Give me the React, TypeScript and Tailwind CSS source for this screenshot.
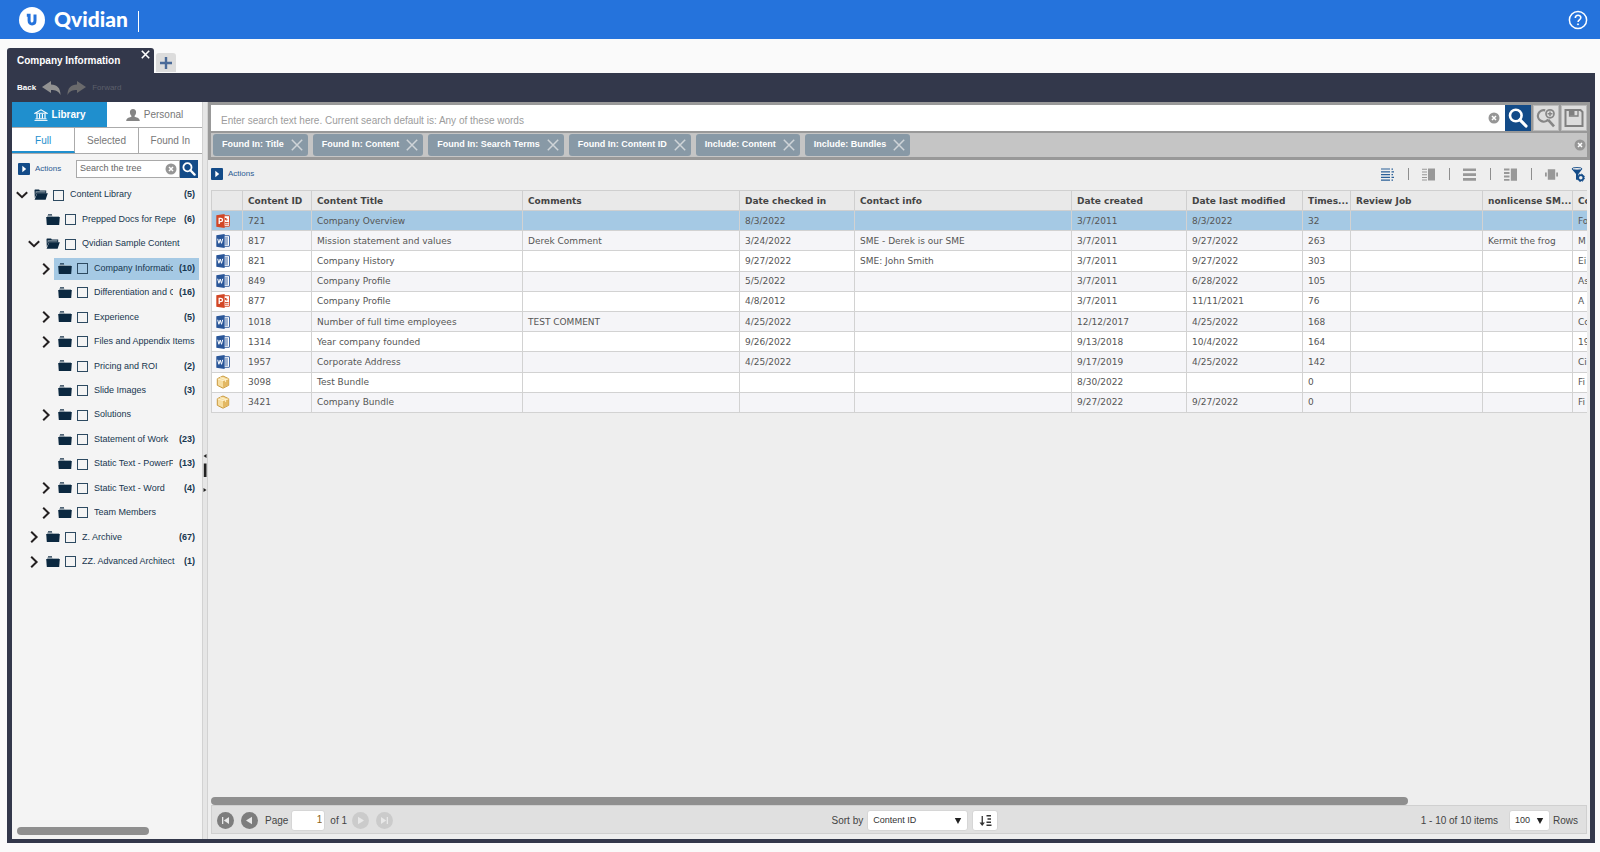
import { useState } from "react";
import type { ReactNode } from "react";

type TreeNode = {
  label: string;
  level: 0 | 1 | 2;
  count?: number;
  state?: "open" | "closed";
  selected?: boolean;
};

const tree: TreeNode[] = [
  { label: "Content Library", level: 0, count: 5, state: "open" },
  { label: "Prepped Docs for Repe", level: 1, count: 6 },
  { label: "Qvidian Sample Content", level: 1, state: "open" },
  { label: "Company Information", level: 2, count: 10, state: "closed", selected: true },
  { label: "Differentiation and C", level: 2, count: 16 },
  { label: "Experience", level: 2, count: 5, state: "closed" },
  { label: "Files and Appendix Items", level: 2, state: "closed" },
  { label: "Pricing and ROI", level: 2, count: 2 },
  { label: "Slide Images", level: 2, count: 3 },
  { label: "Solutions", level: 2, state: "closed" },
  { label: "Statement of Work", level: 2, count: 23 },
  { label: "Static Text - PowerPoint", level: 2, count: 13 },
  { label: "Static Text - Word", level: 2, count: 4, state: "closed" },
  { label: "Team Members", level: 2, state: "closed" },
  { label: "Z. Archive", level: 1, count: 67, state: "closed" },
  { label: "ZZ. Advanced Architect", level: 1, count: 1, state: "closed" },
];

const indent = ["pl-1", "pl-4", "pl-7"];

const filters = [
  "Found In: Title",
  "Found In: Content",
  "Found In: Search Terms",
  "Found In: Content ID",
  "Include: Content",
  "Include: Bundles",
];

const columns = [
  { title: "", width: "w-[31px]" },
  { title: "Content ID", width: "w-[69px]" },
  { title: "Content Title", width: "w-[211px]" },
  { title: "Comments", width: "w-[217px]" },
  { title: "Date checked in", width: "w-[115px]" },
  { title: "Contact info", width: "w-[217px]" },
  { title: "Date created", width: "w-[115px]" },
  { title: "Date last modified", width: "w-[116px]" },
  { title: "Times...", width: "w-[48px]" },
  { title: "Review Job", width: "w-[132px]" },
  { title: "nonlicense SM...", width: "w-[90px]" },
  { title: "Co", width: "w-[60px]" },
];

const rows = [
  ["ppt", "721", "Company Overview", "", "8/3/2022", "", "3/7/2011", "8/3/2022", "32", "", "", "Fo"],
  ["word", "817", "Mission statement and values", "Derek Comment", "3/24/2022", "SME - Derek is our SME", "3/7/2011", "9/27/2022", "263", "", "Kermit the frog", "M"],
  ["word", "821", "Company History", "", "9/27/2022", "SME: John Smith", "3/7/2011", "9/27/2022", "303", "", "", "Ei"],
  ["word", "849", "Company Profile", "", "5/5/2022", "", "3/7/2011", "6/28/2022", "105", "", "", "As"],
  ["ppt", "877", "Company Profile", "", "4/8/2012", "", "3/7/2011", "11/11/2021", "76", "", "", "A"],
  ["word", "1018", "Number of full time employees", "TEST COMMENT", "4/25/2022", "", "12/12/2017", "4/25/2022", "168", "", "", "Co"],
  ["word", "1314", "Year company founded", "", "9/26/2022", "", "9/13/2018", "10/4/2022", "164", "", "", "19"],
  ["word", "1957", "Corporate Address", "", "4/25/2022", "", "9/17/2019", "4/25/2022", "142", "", "", "Ci"],
  ["bundle", "3098", "Test Bundle", "", "", "", "8/30/2022", "", "0", "", "", "Fi"],
  ["bundle", "3421", "Company Bundle", "", "", "", "9/27/2022", "9/27/2022", "0", "", "", "Fi"],
];

function Magnifier({ className }: { className: string }) {
  return (
    <svg viewBox="0 0 20 20" className={className} fill="none" stroke="currentColor">
      <circle cx="7.8" cy="7.5" r="5.8" strokeWidth="2.6" />
      <path d="M12 11.8 18 18" strokeWidth="3.2" strokeLinecap="round" />
    </svg>
  );
}

function ClearIcon() {
  return (
    <svg viewBox="0 0 12 12" className="size-3">
      <circle cx="6" cy="6" r="5.5" fill="#969696" />
      <path d="M4 4l4 4M8 4l-4 4" stroke="#fff" strokeWidth="1.5" />
    </svg>
  );
}

function ActionsButton() {
  return (
    <button className="flex items-center gap-[5px] text-[8px] text-[#2b5a92]">
      <svg viewBox="0 0 12 12" className="size-3">
        <rect width="12" height="12" rx="1" fill="#134b88" />
        <path d="M4.3 2.8 8.2 6 4.3 9.2z" fill="#fff" />
      </svg>
      Actions
    </button>
  );
}

function Chevron({ open }: { open: boolean }) {
  return (
    <svg viewBox="0 0 12 12" className="size-3" fill="none" stroke="#231f20" strokeWidth="2">
      <path d={open ? "M.8 3.2 6 8.2l5.2-5" : "M3.2 .8 8.6 6l-5.4 5.2"} />
    </svg>
  );
}

function Folder({ open }: { open: boolean }) {
  return (
    <svg viewBox="0 0 14 12" className="h-3 w-3.5">
      {open ? (
        <>
          <path d="M.5 1.2.9.4h4.2l.7 1h6.4v3H3L.8 9z" fill="#0b2840" />
          <path d="M1.6 2.2h9.8v1.3H2.6l-1 2.2z" fill="#8b9aa5" />
          <path d="M.6 10.8 3.2 4.2h10.6l-2.2 6.6z" fill="#0b2840" />
        </>
      ) : (
        <>
          <path d="M1.2 2.800V1.400H6l.8.8H13v2H1.200z" fill="#8b9aa5" />
          <path d="M2 .3h4v1.100H2z" fill="#0b2840" />
          <path d="M.2 3h13.600l-.6 8H.8z" fill="#0b2840" />
        </>
      )}
    </svg>
  );
}

function FileIcon({ kind }: { kind: string }) {
  if (kind === "bundle") {
    return (
      <svg viewBox="0 0 14 14" className="size-3.5">
        <path d="M7 1 12.700 3.700v6.600L7 13.200 1.300 10.300V3.700z" fill="#f6dda0" stroke="#c9983c" strokeWidth="1" />
        <path d="M7 5.500v7.500l5.400-2.800V4z" fill="#e3b863" />
        <path d="M1.600 3.900 7 5.600l5.400-1.700M4.200 2.500 9.600 4.500v2.600" fill="none" stroke="#fff3cf" strokeWidth=".9" />
      </svg>
    );
  }
  const color = kind === "ppt" ? "#d24625" : "#2a5699";
  return (
    <svg viewBox="0 0 14 14" className="size-3.5">
      <rect x="7" y="1.700" width="6.500" height="10.600" rx=".4" fill="#fff" stroke={color} strokeWidth=".9" />
      {kind === "ppt" ? (
        <>
          <path d="M9 4h1.500v1.500H12A1.600 1.600 0 1 1 9 4z" fill={color} />
          <path d="M9 8.500h3.500M9 10.200h3.500" stroke={color} strokeWidth=".9" />
        </>
      ) : (
        <path d="M8.500 4h3.500M8.500 6h3.500M8.500 8h3.500M8.500 10h3.500" stroke={color} strokeWidth=".9" />
      )}
      <path d="M.3 1.300 8.600 0v14L.3 12.700z" fill={color} />
      {kind === "ppt" ? (
        <path d="M3.200 10V4.300h1.600a1.600 1.600 0 0 1 0 3.400H3.200" fill="none" stroke="#fff" strokeWidth="1.300" />
      ) : (
        <path d="M1.700 4.800 2.900 9.300 4.200 5l1.300 4.300 1.200-4.500" fill="none" stroke="#fff" strokeWidth="1" />
      )}
    </svg>
  );
}

function ViewButton({ label, active, children }: { label: string; active?: boolean; children: ReactNode }) {
  return (
    <button aria-label={label} className={active ? "text-[#2b6098]" : "text-[#989898]"}>
      <svg viewBox="0 0 13 13" className="size-[13px]" fill="currentColor">
        {children}
      </svg>
    </button>
  );
}

function Separator() {
  return (
    <span className="flex w-2 justify-center">
      <span className="h-3 w-px bg-[#8e8e8e]" />
    </span>
  );
}

function PageButton({ label, disabled, children }: { label: string; disabled?: boolean; children: ReactNode }) {
  return (
    <button
      aria-label={label}
      disabled={disabled}
      className={`flex size-[17px] items-center justify-center rounded-full text-[#e8e8e8] ${disabled ? "bg-[#cbcbcb]" : "bg-[#7d7d7d]"}`}
    >
      <svg viewBox="0 0 9 9" className="size-[9px]" fill="currentColor">
        {children}
      </svg>
    </button>
  );
}

function SelectArrow() {
  return (
    <svg viewBox="0 0 8 6" className="pointer-events-none absolute right-1.5 top-2 h-1.5 w-2" fill="#222">
      <path d="M.8 0h6.400L4 6z" />
    </svg>
  );
}

function Sidebar() {
  return (
    <aside className="flex w-[190px] shrink-0 flex-col bg-[#f4f4f4]">
      <div className="grid h-[26px] grid-cols-2 border-b border-[#ababab] text-[10px]">
        <button className="flex items-center justify-center gap-1 bg-[#1f8fce] font-bold text-white">
          <svg viewBox="0 0 14 12" className="h-3 w-3.5" fill="none" stroke="currentColor">
            <path d="M1 4.200 7 .8l6 3.400z" strokeWidth="1.100" />
            <path d="M3 5v4.500M5.600 5v4.500M8.400 5v4.500M11 5v4.500" strokeWidth="1.200" />
            <path d="M1.500 9.800h11M.5 11.400h13" strokeWidth="1" />
          </svg>
          Library
        </button>
        <button className="flex items-center justify-center gap-1 bg-white text-[#777]">
          <svg viewBox="0 0 14 12" className="h-3 w-3.5" fill="#858585">
            <path d="M7 0c2 0 3.200 1.300 3.100 3.200C10 5 9.300 6 8.600 6.800v1C10 8.300 13.600 8.500 13.800 12H.2C.4 8.500 4 8.300 5.400 7.800v-1C4.700 6 4 5 3.900 3.200 3.800 1.300 5 0 7 0z" />
          </svg>
          Personal
        </button>
      </div>
      <div className="grid h-[26px] grid-cols-3 divide-x divide-[#ababab] border-b border-[#ababab] bg-white text-[10px] text-[#777]">
        <button className="border-b-2 border-b-[#1f8fce] pt-0.5 text-[#1f8fce]">Full</button>
        <button>Selected</button>
        <button>Found In</button>
      </div>

      <div className="flex h-[29px] items-center justify-between pl-1.5 pr-1">
        <ActionsButton />
        <form className="flex h-[18px] w-[122px]" onSubmit={(e) => e.preventDefault()}>
          <div className="flex min-w-0 flex-1 items-center border border-[#a9a9a9] bg-white pl-[3px] pr-0.5">
            <input
              aria-label="Search the tree"
              placeholder="Search the tree"
              className="min-w-0 flex-1 text-[9px] outline-none placeholder:text-[#666]"
            />
            <button type="button" aria-label="Clear tree search">
              <ClearIcon />
            </button>
          </div>
          <button aria-label="Search tree" className="flex w-[18px] items-center justify-center bg-[#134b88] text-white">
            <Magnifier className="size-3.5" />
          </button>
        </form>
      </div>

      <ul className="grid h-[391px] auto-rows-fr grid-cols-1 text-[9px] text-[#17364f]">
        {tree.map((node) => (
          <li key={node.label} className={`flex min-h-0 items-center pr-[3px] ${indent[node.level]}`}>
            <span className="flex w-3.5 shrink-0">
              {node.state && (
                <button aria-label={`Toggle ${node.label}`}>
                  <Chevron open={node.state === "open"} />
                </button>
              )}
            </span>
            <label
              className={`flex h-[22px] min-w-0 flex-1 items-center pl-1 ${node.selected ? "bg-[#a5c9e4]" : ""}`}
            >
              <span className="shrink-0">
                <Folder open={node.state === "open"} />
              </span>
              <input
                type="checkbox"
                className="ml-[5px] mr-1.5 size-[11px] shrink-0 appearance-none border border-[#2d4a61] checked:bg-[#2d4a61]"
              />
              <span className="flex-1 overflow-hidden whitespace-nowrap">{node.label}</span>
              {node.count && <span className="ml-1.5 mr-1 shrink-0 font-bold">({node.count})</span>}
            </label>
          </li>
        ))}
      </ul>

      <div className="mb-1 ml-[5px] mt-auto h-2 w-[132px] rounded-full bg-[#8f8f8f]" />
    </aside>
  );
}

function Splitter() {
  return (
    <div className="flex w-1.5 shrink-0 flex-col items-center justify-center border-x border-[#d2d2d2] bg-[#e6e6e6] pt-1.5">
      <svg viewBox="0 0 4 40" className="h-10 w-1" fill="#222">
        <path d="M3.500 0v4L.5 2zM.8 9.500h2.700v13.500H.8zM.5 34v4l3-2z" />
      </svg>
    </div>
  );
}

function SearchPanel() {
  return (
    <section className="border-[3px] border-[#999] bg-[#999]">
      <form className="flex h-[26px]" onSubmit={(e) => e.preventDefault()}>
        <div className="flex min-w-0 flex-1 items-center bg-white pl-2.5 pr-[5px]">
          <input
            aria-label="Search library"
            placeholder="Enter search text here. Current search default is: Any of these words"
            className="min-w-0 flex-1 pt-1 text-[10px] outline-none placeholder:text-[#9c9c9c]"
          />
          <button type="button" aria-label="Clear search">
            <ClearIcon />
          </button>
        </div>
        <button aria-label="Search" className="flex w-[26px] items-center justify-center bg-[#134b88] text-white">
          <Magnifier className="size-5" />
        </button>
        <button
          type="button"
          aria-label="Advanced search"
          className="ml-0.5 flex w-[26px] items-center justify-center border border-[#bbb] bg-[#ddd] text-[#868686]"
        >
          <svg viewBox="0 0 20 20" className="size-5" fill="none" stroke="currentColor">
            <path d="M9.200 2.400A5.700 5.700 0 1 0 12.200 11.300" strokeWidth="2.200" />
            <path d="M12.200 11.800 18 18.300" strokeWidth="2.600" />
            <circle cx="14" cy="5.800" r="4" strokeWidth="1.700" />
            <path d="M14 3.400v4.800M11.600 5.800h4.800" strokeWidth="1.500" />
          </svg>
        </button>
        <button
          type="button"
          aria-label="Save search"
          className="ml-0.5 flex w-[26px] items-center justify-center border border-[#bbb] bg-[#ddd] text-[#808080]"
        >
          <svg viewBox="0 0 20 20" className="size-5" fill="none" stroke="currentColor">
            <path d="M1.500 2h15l2 2v14h-17z" strokeWidth="2" />
            <path d="M5.500 2v6h8.500V2" strokeWidth="1.300" />
            <path d="M6 2h4.500v5.500H6z" fill="currentColor" stroke="none" />
          </svg>
        </button>
      </form>
      <div className="mt-0.5 flex h-6 items-center justify-between bg-[#c5c5c5] pl-0.5 pr-px">
        <ul className="flex gap-[5px]">
          {filters.map((filter) => (
            <li
              key={filter}
              className="flex h-[22px] items-center gap-[7px] rounded-[3px] bg-[#8899a6] pl-[9px] pr-[5px] text-[9px] font-bold text-white"
            >
              {filter}
              <button aria-label={`Remove ${filter}`}>
                <svg viewBox="0 0 12 12" className="size-3" stroke="#cfd4d8" strokeWidth="1.500">
                  <path d="M.8.8l10.400 10.400M11.200.8.8 11.200" />
                </svg>
              </button>
            </li>
          ))}
        </ul>
        <button aria-label="Clear filters">
          <ClearIcon />
        </button>
      </div>
    </section>
  );
}

function Toolbar() {
  return (
    <div className="flex h-[30px] shrink-0 items-center justify-between pb-0.5 pr-0.5">
      <ActionsButton />
      <div className="flex items-center gap-2.5">
        <ViewButton label="List view" active>
          <path d="M0 .5h9v1H0zM0 3.250h9v1.200H0zM0 6h9v1.200H0zM0 8.750h9v1.200H0zM0 11.500h9v1.200H0zM10.500.5H12v1.200h-1.500zM10.500 3.250H13v1.200h-2.500zM10.500 6H12v1.200h-1.500zM10.500 8.750H13v1.200h-2.500zM10.500 11.500H12v1.200h-1.500z" />
        </ViewButton>
        <Separator />
        <ViewButton label="List with preview">
          <path d="M0 .8h5v1H0zM0 3.500h5v1H0zM0 6.200h5v1H0zM0 8.900h5v1H0zM0 11.600h5v1H0zM6 .5h7v12H6z" />
        </ViewButton>
        <Separator />
        <ViewButton label="Row view">
          <path d="M0 .5h13v2.600H0zM0 5.300h13v2.600H0zM0 10.100h13v2.600H0z" />
        </ViewButton>
        <Separator />
        <ViewButton label="Rows with preview">
          <path d="M0 .5h5.500v2H0zM0 4h5.500v2H0zM0 7.500h5.500v2H0zM0 11h5.500v1.800H0zM6.800.5H13v12.300H6.800z" />
        </ViewButton>
        <Separator />
        <ViewButton label="Carousel view">
          <path d="M2.800 1.200h7.400v10.600H2.800zM0 4.500h1.800v4H0zM11.200 4.500H13v4h-1.800z" />
        </ViewButton>
        <button aria-label="Filter settings" className="ml-[3px]">
          <svg viewBox="0 0 14 15" className="h-[15px] w-3.5" fill="#134b88">
            <path d="M.5 1.800 5 7v6l2-1.200V7.500L11.500 1.800z" />
            <ellipse cx="6" cy="1.800" rx="5" ry="1.300" fill="#eee" stroke="#134b88" strokeWidth=".9" />
            <circle cx="9.800" cy="10.800" r="2.600" fill="#eee" stroke="#134b88" strokeWidth="1.700" />
            <circle cx="9.800" cy="10.800" r="3.700" fill="none" stroke="#134b88" strokeDasharray="1.500 1.400" />
          </svg>
        </button>
      </div>
    </div>
  );
}

function ContentTable() {
  const [selected, setSelected] = useState(0);
  return (
    <div className="overflow-hidden">
      <table className="h-[223px] w-[1421px] table-fixed border-collapse font-['DejaVu_Sans',Verdana,sans-serif] text-[9px] leading-3 text-[#555]">
        <thead>
          <tr className="h-5 bg-[#e9e9e9] text-left text-[#444]">
            {columns.map(({ title, width }) => (
              <th key={title} className={`whitespace-nowrap border border-[#cfcfcf] px-[5px] py-0 font-bold ${width}`}>
                {title}
              </th>
            ))}
          </tr>
        </thead>
        <tbody>
          {rows.map(([kind, ...cells], i) => (
            <tr
              key={cells[0]}
              onClick={() => setSelected(i)}
              className={`h-5 ${i === selected ? "bg-[#a5c9e4]" : i % 2 ? "bg-[#f5f5f8]" : "bg-white"}`}
            >
              <td className="border border-[#d2d2d2] p-0 pl-1">
                <FileIcon kind={kind} />
              </td>
              {cells.map((cell, j) => (
                <td key={j} className="whitespace-nowrap border border-[#d2d2d2] px-[5px] py-0">
                  {cell}
                </td>
              ))}
            </tr>
          ))}
        </tbody>
      </table>
    </div>
  );
}

function Pager() {
  return (
    <footer className="flex h-[29px] shrink-0 items-center justify-between border border-[#d0d0d0] bg-[#e0e0e0] pl-[5px] pr-2 pt-0.5 text-[10px] text-[#444]">
      <div className="mr-4 flex items-center gap-[7px]">
        <PageButton label="First page">
          <path d="M1 1h1.300v7H1zM8 1v7L2.800 4.500z" />
        </PageButton>
        <PageButton label="Previous page">
          <path d="M7 .8v7.400L1 4.500z" />
        </PageButton>
        <label className="flex items-center gap-[3px]">
          Page
          <input
            defaultValue="1"
            className="h-[21px] w-[34px] rounded-[3px] border border-[#d6d6d6] bg-white pb-0.5 pr-0.5 text-right text-[#8a6420] outline-none"
          />
        </label>
        <span className="-mx-0.5">of 1</span>
        <PageButton label="Next page" disabled>
          <path d="M2 .8v7.400l6-3.700z" />
        </PageButton>
        <PageButton label="Last page" disabled>
          <path d="M1 1v7l5.200-3.500zM6.700 1H8v7H6.700z" />
        </PageButton>
      </div>
      <div className="flex items-center gap-1">
        <label htmlFor="sort">Sort by</label>
        <div className="relative">
          <select
            id="sort"
            className="block h-[21px] w-[101px] appearance-none rounded-[3px] border border-[#d6d6d6] bg-white pl-[5px] text-[9px] text-[#333]"
          >
            <option>Content ID</option>
            <option>Content Title</option>
          </select>
          <SelectArrow />
        </div>
        <button
          aria-label="Sort direction"
          className="flex h-[21px] w-[26px] items-center justify-center rounded-[3px] border border-[#d6d6d6] bg-white"
        >
          <svg viewBox="0 0 13 12" className="h-3 w-[13px]" fill="#333">
            <path d="M2.600 1h1.300v6.500h2L3.200 11 .5 7.500h2.100zM7.500 0H12v1.500H7.500zM8.500 3.200H12v1.500H8.500zM7.500 6.400H12v1.500H7.500zM7.500 9.600h5v1.500h-5z" />
          </svg>
        </button>
      </div>
      <div className="flex items-center gap-[3px]">
        <span className="mr-2">1 - 10 of 10 items</span>
        <div className="relative">
          <select
            id="page-size"
            className="block h-[21px] w-[41px] appearance-none rounded-[3px] border border-[#d6d6d6] bg-white pl-[5px] text-[9px] text-[#333]"
          >
            <option>100</option>
            <option>50</option>
          </select>
          <SelectArrow />
        </div>
        <label htmlFor="page-size">Rows</label>
      </div>
    </footer>
  );
}

export default function App() {
  return (
    <div className="flex h-screen flex-col bg-[#fafafa] font-['Liberation_Sans',Arial,sans-serif]">
      <header className="flex h-[39px] shrink-0 items-center justify-between bg-[#2573dc] pl-[19px] pr-3 text-white">
        <div className="flex items-center">
          <svg viewBox="0 0 26 26" className="size-[26px]">
            <circle cx="13" cy="13" r="13" fill="#fff" />
            <path d="M7.800 8.200h2.300v5.600c0 4.400 5.900 4.200 5.900-.3V7.400" fill="none" stroke="#2573dc" strokeWidth="3" />
          </svg>
          <span className="mb-0.5 ml-[9px] font-['Lato',sans-serif] text-[21px] font-black leading-6">Qvidian</span>
          <span className="ml-2.5 mt-1 h-[21px] w-px bg-white" />
        </div>
        <button aria-label="Help">
          <svg viewBox="0 0 20 20" className="size-5" fill="none" stroke="currentColor">
            <circle cx="10" cy="10" r="8.600" strokeWidth="1.500" />
            <path d="M7.300 8c0-3.600 5.600-3.500 5.500-.2 0 2-2.700 2.200-2.700 4.200" strokeWidth="1.600" />
            <circle cx="10" cy="14.300" r=".6" fill="currentColor" />
          </svg>
        </button>
      </header>

      <nav className="mt-[9px] flex h-[25px] shrink-0 items-end gap-[2px] pl-[7px]">
        <div className="flex h-full w-[147px] justify-between rounded-t-[3px] bg-[#33384b] pl-2.5 pr-1 text-[10px] font-bold text-white">
          <span className="pt-[5px]">Company Information</span>
          <button aria-label="Close tab" className="self-start pt-0.5">
            <svg viewBox="0 0 9 9" className="size-[9px]" stroke="#fff" strokeWidth="1.600">
              <path d="M.8.8l7.400 7.400M8.200.8.8 8.200" />
            </svg>
          </button>
        </div>
        <button aria-label="New tab" className="mb-px flex h-[19px] w-5 items-center justify-center rounded-t-[3px] bg-[#dcdcdc]">
          <svg viewBox="0 0 12 12" className="size-3" fill="#4a6a98">
            <path d="M4.800 0h2.400v4.800H12v2.400H7.200V12H4.800V7.200H0V4.800h4.800z" />
          </svg>
        </button>
      </nav>

      <main className="mb-[9px] ml-[7px] mr-[5px] flex min-h-0 flex-1 flex-col bg-[#33384b] px-[5px] pb-1">
        <div className="flex h-[29px] shrink-0 items-center pl-[5px] text-[8px]">
          <button className="flex items-center gap-1.5 font-bold text-white">
            Back
            <svg viewBox="0 0 19 14" className="h-3.5 w-[19px]" fill="#929292">
              <path d="M0 6 9 0v3.500c6 0 9.500 3.500 9.500 10.500-2-4-5-5-9.500-5V12z" />
            </svg>
          </button>
          <button disabled className="ml-1.5 flex items-center gap-1.5 text-[#5c5f6a]">
            <svg viewBox="0 0 19 14" className="h-3.5 w-[19px]" fill="#6a6a6c">
              <path d="M19 6l-9-6v3.500C4 3.500.5 7 .5 14c2-4 5-5 9.500-5V12z" />
            </svg>
            Forward
          </button>
        </div>

        <div className="flex min-h-0 flex-1">
          <Sidebar />
          <Splitter />
          <div className="flex min-w-0 flex-1 flex-col bg-[#eee]">
            <SearchPanel />
            <div className="flex min-h-0 flex-1 flex-col px-[3px] pb-[5px]">
              <Toolbar />
              <ContentTable />
              <div className="mt-auto h-2 w-[87%] shrink-0 rounded-full bg-[#8f8f8f]" />
              <Pager />
            </div>
          </div>
        </div>
      </main>
    </div>
  );
}
